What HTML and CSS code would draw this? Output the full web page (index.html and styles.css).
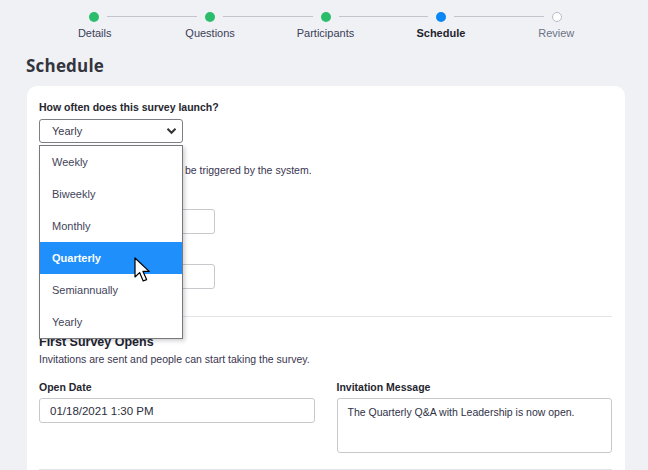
FILE: index.html
```html
<!DOCTYPE html>
<html>
<head>
<meta charset="utf-8">
<link rel="stylesheet" href="styles.css">
</head>
<body>
<div class="page">
  <div class="stepper">
    <div class="track">
      <span class="dot done"></span><span class="line"></span>
      <span class="dot done"></span><span class="line"></span>
      <span class="dot done"></span><span class="line"></span>
      <span class="dot current"></span><span class="line"></span>
      <span class="dot todo"></span>
    </div>
    <div class="labels">
      <span>Details</span>
      <span>Questions</span>
      <span>Participants</span>
      <span class="cur">Schedule</span>
      <span class="todo-l">Review</span>
    </div>
  </div>

  <h1 class="title">Schedule</h1>

  <div class="card">
    <div class="label">How often does this survey launch?</div>
    <div class="select-wrap">
      <div class="select">
        <span>Yearly</span>
        <svg class="chev" width="11" height="8" viewBox="0 0 11 8"><path d="M1.5 1.8 L5.5 5.8 L9.5 1.8" fill="none" stroke="#333" stroke-width="2"/></svg>
      </div>
      <ul class="menu">
        <li>Weekly</li>
        <li>Biweekly</li>
        <li>Monthly</li>
        <li class="hl">Quarterly</li>
        <li>Semiannually</li>
        <li>Yearly</li>
      </ul>
      <svg class="cursor" width="20" height="27" viewBox="0 0 20 27"><path d="M1 1 L1 20 L5.6 15.6 L9.2 24 L12.6 22.6 L9 14.4 L15.2 14.4 Z" fill="#fff" stroke="#000" stroke-width="1.2" stroke-linejoin="round"/></svg>
    </div>
    <p class="help first">All the subsequent surveys will be triggered by the system.</p>
    <div class="input short first-input"></div>
    <div class="input short second-input"></div>

    <hr class="divider">

    <h2 class="sub">First Survey Opens</h2>
    <p class="help">Invitations are sent and people can start taking the survey.</p>
    <div class="cols">
      <div class="col">
        <div class="label">Open Date</div>
        <div class="input date">01/18/2021 1:30 PM</div>
      </div>
      <div class="col">
        <div class="label">Invitation Message</div>
        <div class="textarea">The Quarterly Q&amp;A with Leadership is now open.</div>
      </div>
    </div>
    <hr class="divider bottom">
  </div>
</div>
</body>
</html>
```

FILE: styles.css
```css
html, body {
  margin: 0;
  padding: 0;
  background: #f0f1f5;
  height: 100%;
  overflow: hidden;
}
body {
  font-family: "Liberation Sans", Arial, sans-serif;
  color: #2f3146;
}
.page {
  padding: 0 23px 0 27px;
}
.stepper {
  padding-top: 11px;
  margin-left: 10px;
  width: 577px;
}
.track {
  display: flex;
  align-items: center;
  margin: 0 52px 0 52px;
  height: 11px;
}
.dot {
  width: 10px;
  height: 10px;
  border-radius: 50%;
  flex: none;
  box-sizing: border-box;
}
.dot.done { background: #2cbd6c; }
.dot.current { background: #0b86f5; }
.dot.todo { background: #fff; border: 1.5px solid #b4bccb; }
.line {
  flex: 1;
  height: 1px;
  background: #c3c5cc;
  margin: 0 8px;
}
.labels {
  display: grid;
  grid-template-columns: repeat(5, 1fr);
  text-align: center;
  font-size: 11px;
  margin-top: 5px;
  color: #3a3e56;
}
.labels .cur { font-weight: bold; color: #1f1f2b; }
.labels .todo-l { color: #6c7285; }

.title {
  font-family: "Open Sans", "Liberation Sans", sans-serif;
  font-weight: 700;
  font-size: 17px;
  margin: 15px 0 0 -1px;
  color: #33353f;
  line-height: 24px;
  letter-spacing: 0.2px;
}
.card {
  background: #fff;
  border-radius: 10px;
  margin-top: 8px;
  padding: 15px 13px 0 12px;
  height: 420px;
  box-sizing: border-box;
}
.label {
  font-size: 10.5px;
  font-weight: bold;
  color: #25262f;
  line-height: 13px;
}
.select-wrap {
  position: relative;
  width: 144px;
  margin-top: 5px;
}
.select {
  height: 24px;
  box-sizing: border-box;
  border: 1px solid #7d7f86;
  border-radius: 3px;
  display: flex;
  align-items: center;
  justify-content: space-between;
  padding: 0 5px 0 12px;
  font-size: 11px;
  color: #3a3c4e;
}
.chev { display: block; }
.menu {
  position: absolute;
  left: 0;
  top: 26px;
  width: 144px;
  box-sizing: border-box;
  margin: 0;
  padding: 0;
  list-style: none;
  background: #fff;
  border: 1px solid #76787d;
  box-shadow: 2px 2px 4px rgba(0,0,0,0.18);
  z-index: 2;
}
.menu li {
  height: 32px;
  line-height: 32px;
  padding-left: 12px;
  font-size: 11px;
  color: #43455a;
}
.menu li.hl {
  background: #1e8ffb;
  color: #fff;
  font-weight: bold;
}
.cursor {
  position: absolute;
  left: 95px;
  top: 138px;
  z-index: 3;
}
.help {
  font-size: 10.5px;
  margin: 0;
  line-height: 13px;
  color: #3a3550;
}
.help.first { margin-top: 21px; }
.input {
  height: 25px;
  box-sizing: border-box;
  border: 1px solid #c8c9cd;
  border-radius: 3px;
}
.input.short { width: 176px; }
.first-input { margin-top: 32px; }
.second-input { margin-top: 30px; }
.divider {
  border: 0;
  border-top: 1px solid #e3e4e8;
  margin: 27px 0 0 0;
}
.sub {
  font-size: 12.5px;
  font-weight: bold;
  margin: 17px 0 0 0;
  line-height: 16px;
  color: #222330;
}
.sub + .help { margin-top: 3px; }
.cols {
  display: grid;
  grid-template-columns: 1fr 1fr;
  gap: 22px;
  margin-top: 15px;
}
.input.date {
  margin-top: 4px;
  display: flex;
  align-items: center;
  padding-left: 10px;
  font-size: 11.5px;
  color: #2c2e3e;
}
.textarea {
  margin-top: 4px;
  height: 55px;
  box-sizing: border-box;
  border: 1px solid #c8c9cd;
  border-radius: 3px;
  padding: 7px 10px;
  font-size: 10.5px;
  line-height: 13px;
  color: #2f3146;
}
.divider.bottom { margin-top: 16px; }
```
